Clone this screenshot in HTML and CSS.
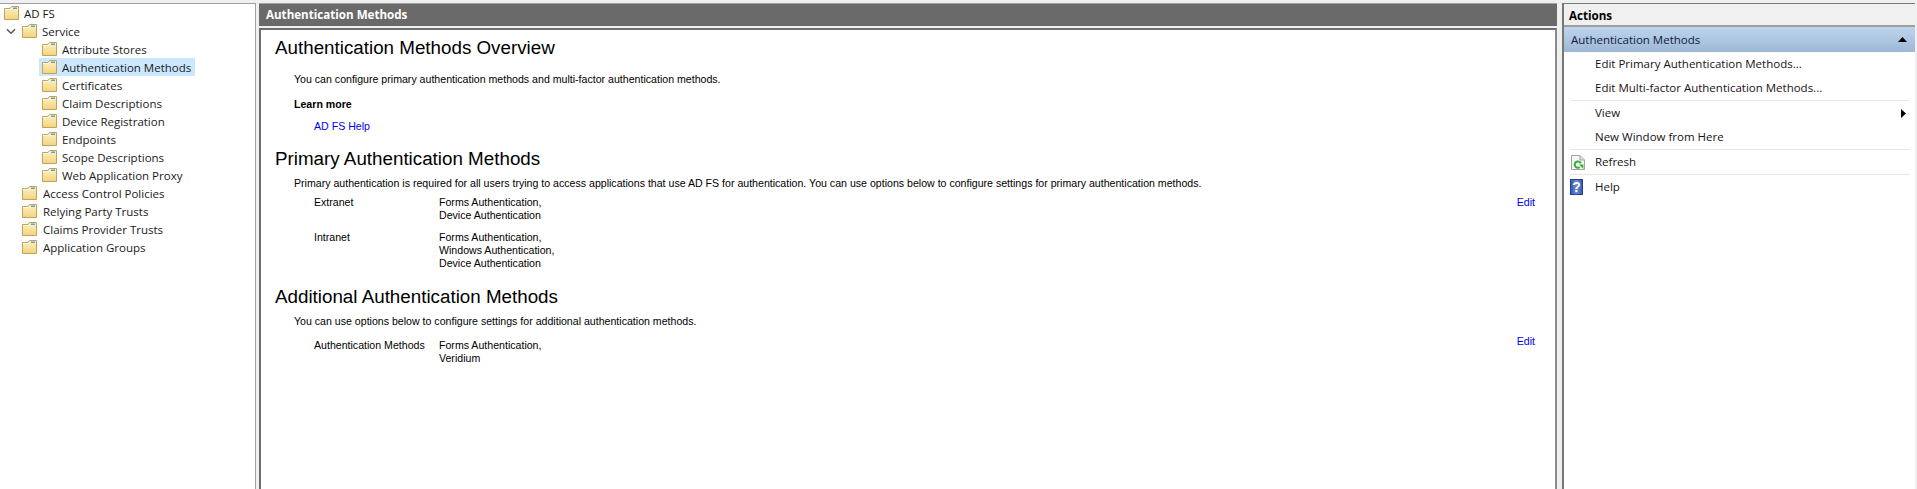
FILE: index.html
```html
<!DOCTYPE html>
<html lang="en">
<head>
<meta charset="utf-8">
<title>AD FS</title>
<link rel="stylesheet" href="styles.css">
</head>
<body>
<svg class="defs" width="0" height="0" aria-hidden="true">
  <defs>
    <linearGradient id="fg" x1="0" y1="0" x2="0" y2="1"><stop offset="0" stop-color="#fdf3c4"/><stop offset="1" stop-color="#f3d27e"/></linearGradient>
    <linearGradient id="hg" x1="0" y1="0" x2="1" y2="0"><stop offset="0" stop-color="#2f4fa6"/><stop offset=".5" stop-color="#6f8fd8"/><stop offset="1" stop-color="#2f4fa6"/></linearGradient>
    <symbol id="folder" viewBox="0 0 16 16">
      <path d="M0.5 3.5V14.5H14.5V1.5H7.5L6 3.5Z" fill="url(#fg)" stroke="#c2a35c"/>
      <path d="M9 2.5h4v1.5H9z" fill="#5aa0dc"/>
      <path d="M1 4.5H7L8.2 3" fill="none" stroke="#fff" stroke-opacity=".7"/>
    </symbol>
  </defs>
</svg>
<div class="app">
  <nav class="tree">
    <div class="node"><svg class="fld"><use href="#folder"/></svg><span>AD FS</span></div>
    <div class="node lvl1"><svg class="chev" viewBox="0 0 10 7"><path d="M1 1.2 5 5.2 9 1.2" fill="none" stroke="#555" stroke-width="1.4"/></svg><svg class="fld"><use href="#folder"/></svg><span>Service</span></div>
    <div class="node lvl2"><svg class="fld"><use href="#folder"/></svg><span>Attribute Stores</span></div>
    <div class="node lvl2 sel"><svg class="fld"><use href="#folder"/></svg><span>Authentication Methods</span></div>
    <div class="node lvl2"><svg class="fld"><use href="#folder"/></svg><span>Certificates</span></div>
    <div class="node lvl2"><svg class="fld"><use href="#folder"/></svg><span>Claim Descriptions</span></div>
    <div class="node lvl2"><svg class="fld"><use href="#folder"/></svg><span>Device Registration</span></div>
    <div class="node lvl2"><svg class="fld"><use href="#folder"/></svg><span>Endpoints</span></div>
    <div class="node lvl2"><svg class="fld"><use href="#folder"/></svg><span>Scope Descriptions</span></div>
    <div class="node lvl2"><svg class="fld"><use href="#folder"/></svg><span>Web Application Proxy</span></div>
    <div class="node lvl1b"><svg class="fld"><use href="#folder"/></svg><span>Access Control Policies</span></div>
    <div class="node lvl1b"><svg class="fld"><use href="#folder"/></svg><span>Relying Party Trusts</span></div>
    <div class="node lvl1b"><svg class="fld"><use href="#folder"/></svg><span>Claims Provider Trusts</span></div>
    <div class="node lvl1b"><svg class="fld"><use href="#folder"/></svg><span>Application Groups</span></div>
  </nav>
  <main class="center">
    <header class="title">Authentication Methods</header>
    <div class="content">
      <h2 class="h-first">Authentication Methods Overview</h2>
      <p class="desc d1">You can configure primary authentication methods and multi-factor authentication methods.</p>
      <p class="learn">Learn more</p>
      <a class="help">AD FS Help</a>
      <h2 class="h-second">Primary Authentication Methods</h2>
      <p class="desc d2">Primary authentication is required for all users trying to access applications that use AD FS for authentication. You can use options below to configure settings for primary authentication methods.</p>
      <div class="row r-ext"><span class="lbl">Extranet</span><span class="val">Forms Authentication,<br>Device Authentication</span><a class="edit">Edit</a></div>
      <div class="row r-int"><span class="lbl">Intranet</span><span class="val">Forms Authentication,<br>Windows Authentication,<br>Device Authentication</span></div>
      <h2 class="h-third">Additional Authentication Methods</h2>
      <p class="desc d3">You can use options below to configure settings for additional authentication methods.</p>
      <div class="row r-add"><span class="lbl">Authentication Methods</span><span class="val">Forms Authentication,<br>Veridium</span><a class="edit edit-up">Edit</a></div>
    </div>
  </main>
  <aside class="actions">
    <div class="a-head">Actions</div>
    <div class="a-band"><span>Authentication Methods</span><svg class="tri" viewBox="0 0 9 5"><path d="M0 5 4.5 0 9 5Z" fill="#000"/></svg></div>
    <div class="a-list">
      <div class="a-item">Edit Primary Authentication Methods...</div>
      <div class="a-item">Edit Multi-factor Authentication Methods...</div>
      <div class="a-sep"></div>
      <div class="a-item">View<svg class="arrow" viewBox="0 0 5 9"><path d="M0 0 5 4.5 0 9Z" fill="#000"/></svg></div>
      <div class="a-item">New Window from Here</div>
      <div class="a-sep"></div>
      <div class="a-item">
        <svg class="ico ico-refresh" viewBox="0 0 14 15"><path d="M.5.5H9L13.5 5V14.5H.5Z" fill="#f6f6f6" stroke="#a3a3a3"/><path d="M9 .5V5H13.5" fill="#ddd" stroke="#a3a3a3"/><path d="M9.9 8.4A3.2 3.2 0 1 0 8.8 12.2" fill="none" stroke="#35ad35" stroke-width="2"/><path d="M8 9.5H12.4V13.9Z" fill="#35ad35"/></svg>
        Refresh</div>
      <div class="a-sep"></div>
      <div class="a-item">
        <svg class="ico ico-help" viewBox="0 0 13 16"><rect width="13" height="16" fill="url(#hg)"/><rect x=".5" y=".5" width="12" height="15" fill="none" stroke="#24408c"/><text x="6.5" y="12.5" text-anchor="middle" class="q">?</text></svg>
        Help</div>
    </div>
  </aside>
</div>
</body>
</html>
```
FILE: styles.css
```css
html, body { margin: 0; height: 100%; overflow: hidden; background: #f0f0f0; }
.defs { position: absolute; }
.app {
  display: grid;
  grid-template-columns: 256px 1298px 355px;
  column-gap: 3px;
  height: 486px;
  margin-top: 3px;
  font: 11.5px "Open Sans", "Liberation Sans", sans-serif;
  color: #000;
}
.app > .actions { margin-left: 2px; }
.tree {
  background: #fff;
  border-top: 1px solid #a0a0a0;
  border-right: 1px solid #a0a0a0;
  box-sizing: border-box;
}
.node {
  display: flex;
  align-items: center;
  height: 18px;
  padding-left: 4px;
  gap: 4px;
  color: #1a1a1a;
}
.fld { width: 16px; height: 16px; flex: none; }
.lvl1 { padding-left: 6px; gap: 4px; }
.chev { width: 10px; height: 7px; flex: none; margin-right: 2px; }
.lvl1b { padding-left: 22px; gap: 5px; }
.lvl2 { padding-left: 42px; }
.sel { background: #cce8ff; margin-left: 39px; margin-right: 60px; padding-left: 3px; }

.center { display: flex; flex-direction: column; min-width: 0; }
.title {
  height: 23px;
  background: #6a6a6a;
  color: #fff;
  border-top: 1px solid #a0a0a0;
  box-sizing: border-box;
  padding-left: 7px;
  font: 700 11.6px/22px "Open Sans", "Liberation Sans", sans-serif;
}
.content {
  flex: 1;
  margin-top: 2px;
  background: #fff;
  border: 2px solid #6e6e6e;
  border-right-color: #8a8a8a;
  border-bottom: 0;
  padding-left: 14px;
  font: 10.6px/13px "Liberation Sans", sans-serif;
}
h2 { margin: 0; font: 400 18.8px/24px "Liberation Sans", sans-serif; }
p { margin: 0; }
.h-first { margin-top: 6px; }
.d1 { margin: 13px 0 0 19px; }
.learn { margin: 12px 0 0 19px; font-weight: 700; }
.help { display: block; margin: 9px 0 0 39px; color: #0000ee; }
.h-second { margin-top: 14px; }
.d2 { margin: 6px 0 0 19px; }
.row { display: flex; margin: 6px 0 0 39px; position: relative; }
.r-int { margin-top: 9px; }
.lbl { width: 125px; flex: none; }
.edit { position: absolute; right: 20px; top: 0; color: #0000ee; }
.edit-up { top: -4px; }
.h-third { margin-top: 15px; }
.d3 { margin: 6px 0 0 19px; }
.r-add { margin-top: 11px; }

.actions {
  background: #fff;
  border-top: 1px solid #777;
  border-left: 2px solid #777;
  display: flex;
  flex-direction: column;
  box-sizing: border-box;
  height: 486px;
}
.a-head {
  height: 21px;
  background: #f0f0f0;
  border-bottom: 2px solid #a0a0a0;
  padding-left: 5px;
  font: 700 11.6px/23px "Open Sans", "Liberation Sans", sans-serif;
}
.a-band {
  display: flex;
  align-items: center;
  justify-content: space-between;
  height: 25px;
  padding: 0 5px 0 7px;
  background: linear-gradient(#bed4ec, #9db8d5);
  color: #102040;
  font-size: 11.5px;
}
.tri { width: 9px; height: 5px; margin-right: 3px; }
.a-list { display: flex; flex-direction: column; padding: 0 5px 0 6px; font-size: 11.5px; }
.a-item {
  display: flex;
  align-items: center;
  height: 24px;
  box-sizing: border-box;
  padding: 0 0 1px 25px;
  position: relative;
  color: #1a1020;
}
.a-sep { height: 1px; background: #e6e6e6; }
.arrow { position: absolute; right: 4px; top: 8px; width: 5px; height: 9px; }
.ico { position: absolute; left: 1px; }
.ico-refresh { top: 5px; width: 14px; height: 15px; }
.ico-help { left: 0; top: 4px; width: 13px; height: 16px; }
.q { font: 700 14px "Liberation Sans", sans-serif; fill: #fff; }
```
